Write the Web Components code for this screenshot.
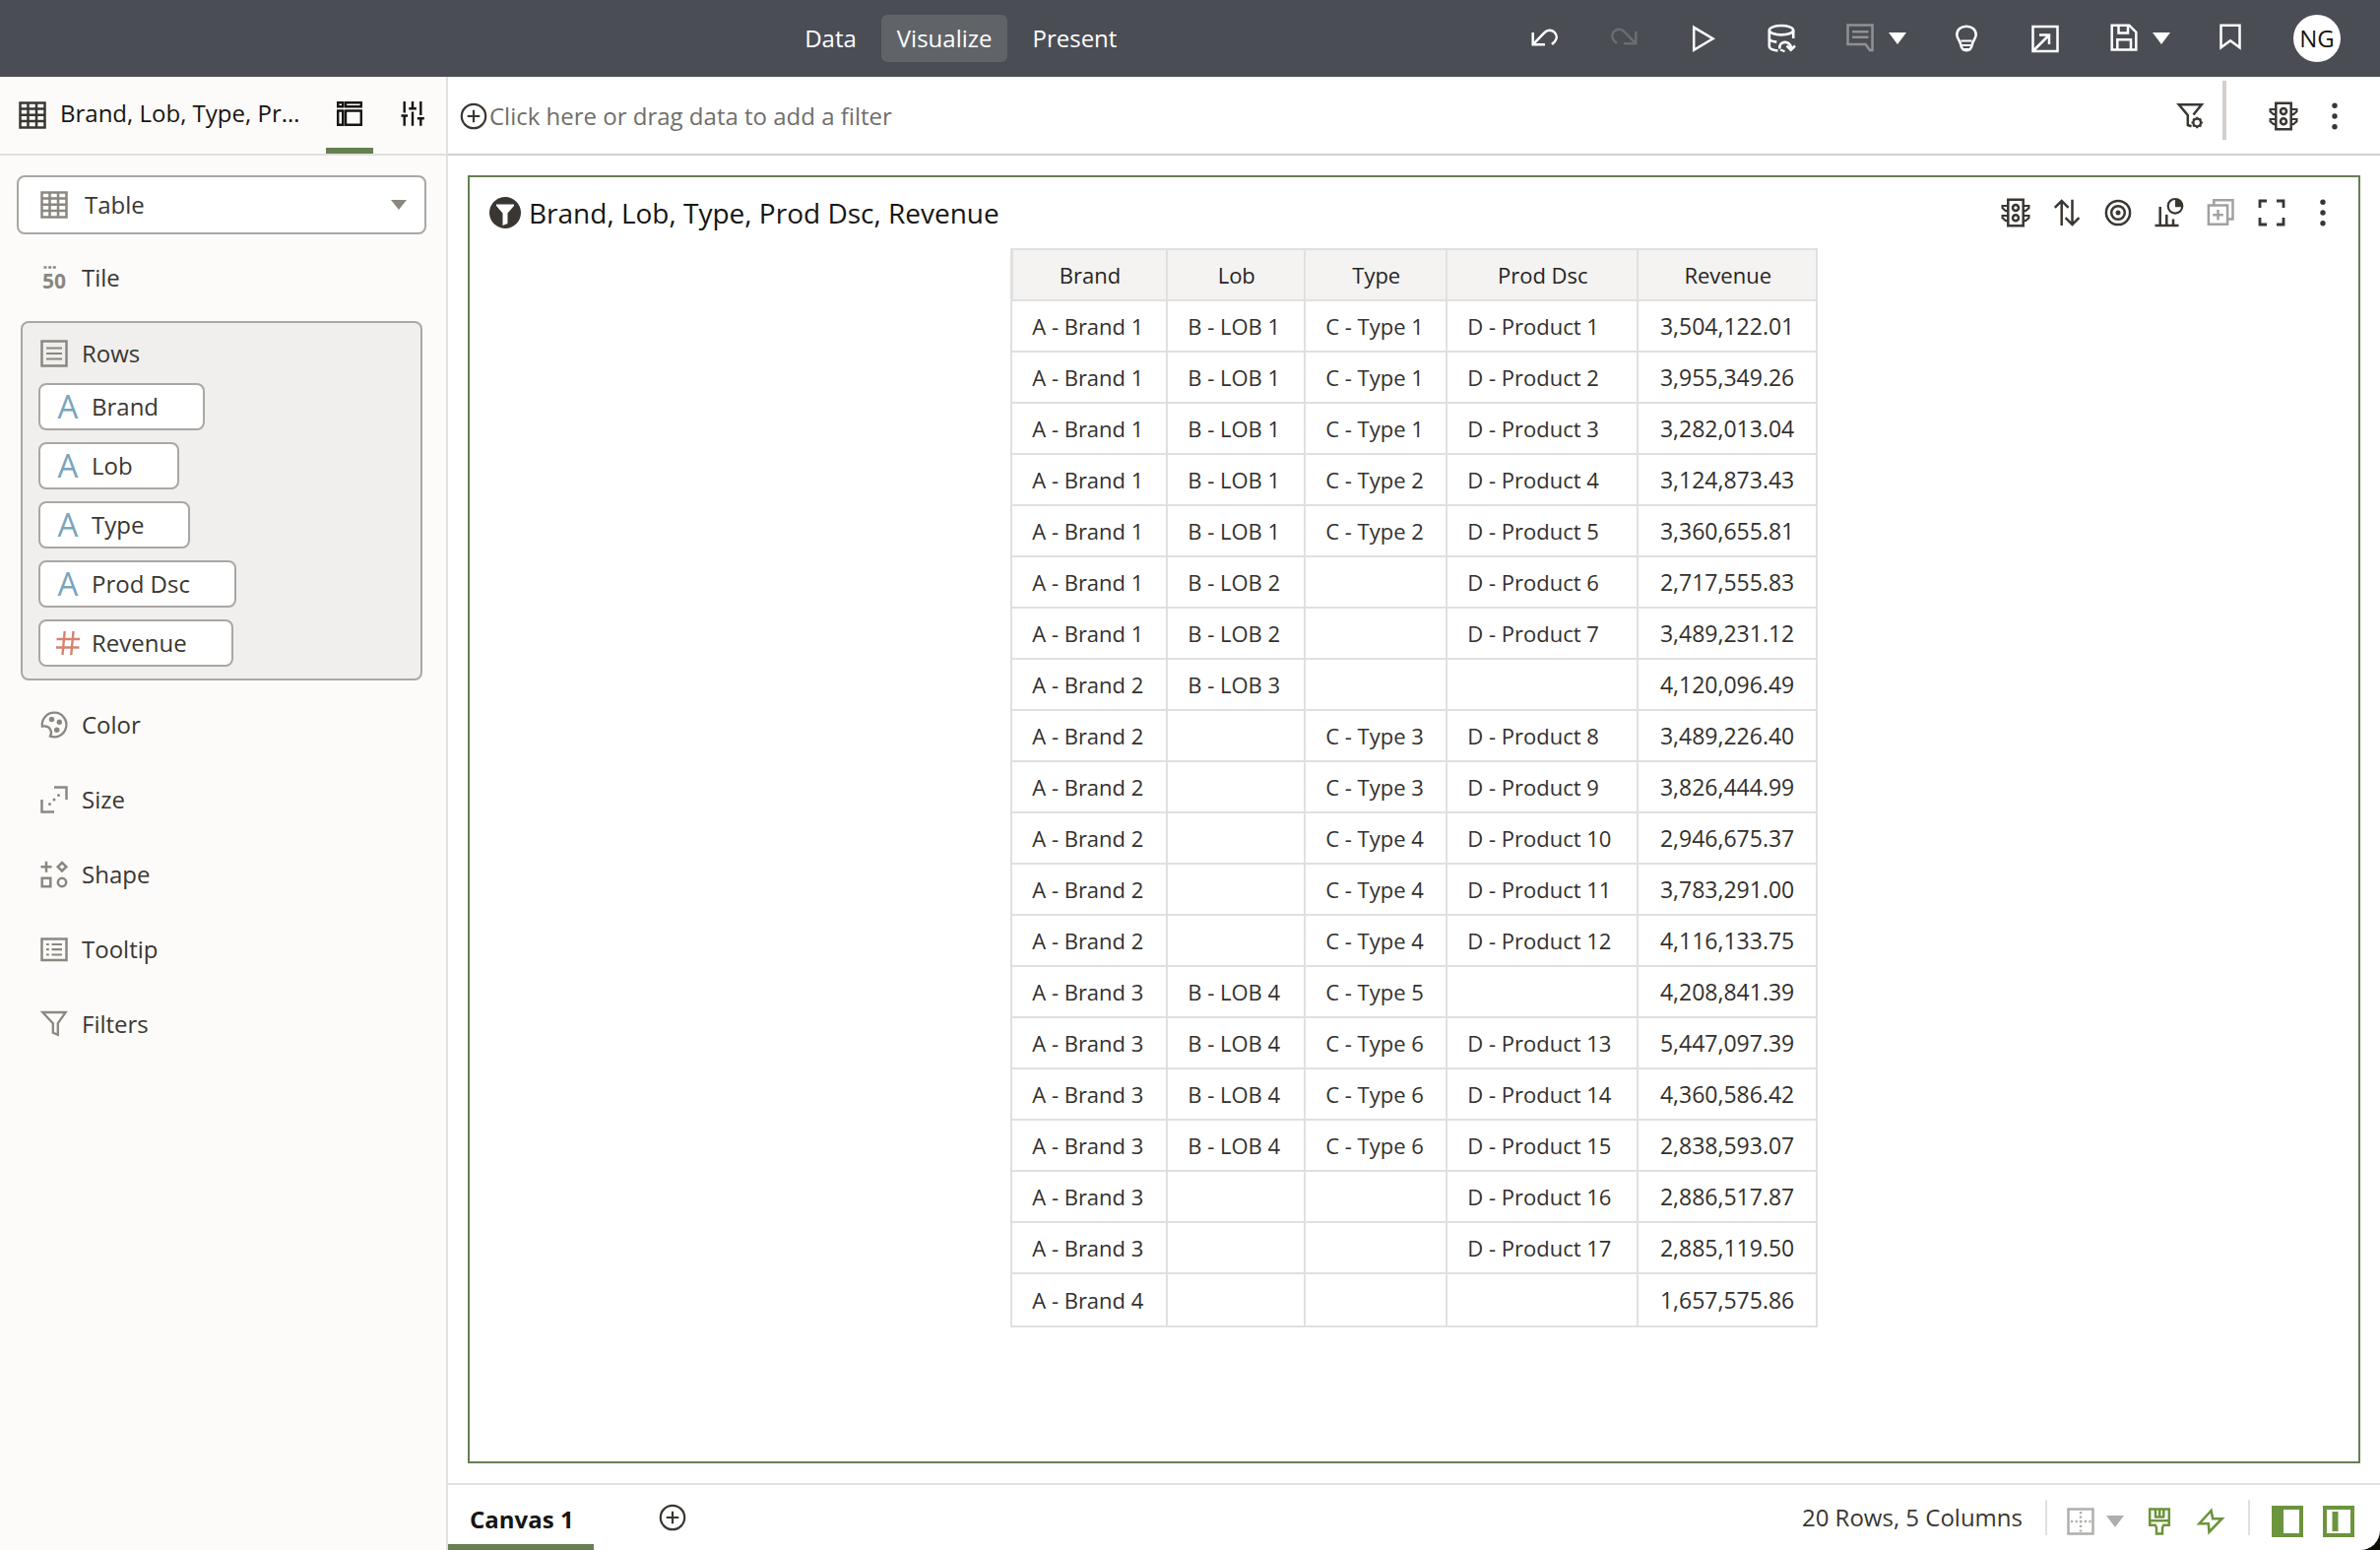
<!DOCTYPE html>
<html lang="en">
<head>
<meta charset="utf-8">
<title>Brand, Lob, Type, Prod Dsc, Revenue</title>
<style>
html, body { height: 100%; }
html { background: #0b0d06; }
body {
  margin: 0;
  font-family: "Open Sans", "Noto Sans", sans-serif;
  font-size: 24px;
  line-height: 32px;
  color: #3a3632;
  --line: #e0e0e0;
  --line-warm: #d4cfcb;
  --green: #677f53;
  --bright: #6c943c;
  --ink: #161513;
}
</style>
</head>
<body>
<dv-app></dv-app>
<script>
const RESET = `
  *, *::before, *::after { box-sizing: border-box; }
  button { all: unset; box-sizing: border-box; cursor: pointer; }
  button:focus-visible { outline: 2px solid #227e9e; }
`;
const define = (name, html, setup) => {
  customElements.define(name, class extends HTMLElement {
    constructor() {
      super();
      const root = this.attachShadow({ mode: 'open' });
      const t = document.createElement('template');
      t.innerHTML = `<style>${RESET}</style>${html}`;
      root.append(t.content.cloneNode(true));
    }
    connectedCallback() { if (setup) setup(this, this.shadowRoot); }
  });
};

/* Icons share a 32 x 32 box and are stroked with the current colour. */
const ICONS = {
  grid: '<path d="M3.5 3.5h25v25h-25zM3.5 9.5h25M3.5 15.7h25M3.5 21.9h25M11.5 3.5v25M20 3.5v25"/>',
  layout: '<g stroke-width="2.4"><path d="M4.2 4.2h5v4h-5zM12 4.2h15.8v4H12zM4.2 12.500h5v14.300h-5zM12 12.500h15.800v14.300H12z"/></g>',
  sliders: '<g stroke-width="2.4"><path d="M7.7 3v11.5M7.700 17.500v10.200M4.500 17.500h6.500M16 3v7M16 13.500v14.200M12.300 10.300h7.500M24.300 3v14M24.300 20v7.700M20.800 20.300h7"/></g>',
  rows: '<path d="M3.500 3.500h25v25h-25z"/><path d="M8 10.500h16M8 16h16M8 21.500h16" stroke-width="2.200"/>',
  tile: '<text x="16" y="27" text-anchor="middle" font-family="Open Sans" font-weight="700" font-size="21" fill="currentColor" stroke="none">50</text><path d="M5.500 5.500h3M10.200 5.500h3M14.800 5.500h3" stroke-width="2.600"/>',
  palette: '<path d="M3.900 17.600A12.300 12.300 0 1 1 12 27.600C13.200 25.500 13.500 23 12 20.500C10.600 18 8 16.800 3.900 17.600z" stroke-width="2.300"/><g fill="currentColor" stroke="none"><circle cx="13.500" cy="10.500" r="2.700"/><circle cx="21.300" cy="13.200" r="2.700"/><circle cx="18.700" cy="21.300" r="2.700"/></g>',
  size: '<path d="M16 3.500h12.500V16M3.500 16v12.500H16"/><g fill="currentColor" stroke="none"><circle cx="11.500" cy="20.500" r="1.500"/><circle cx="16" cy="16" r="1.500"/><circle cx="20.500" cy="11.500" r="1.500"/></g>',
  shape: '<path d="M8 2.700v11M2.500 8.200h11M3.700 19.700h8.600v8.600H3.700zM24 4l4.300 4.200L24 12.500l-4.300-4.300z"/><circle cx="24" cy="24" r="4.200"/>',
  tooltip: '<path d="M3.500 5.500h25v21.500h-25z"/><path d="M8 11h2.800M13.500 11H24M8 16.200h2.800M13.500 16.200H24M8 21.500h2.800M13.500 21.500H24" stroke-width="2.200"/>',
  funnel: '<path d="M4.300 4h23.400l-7.900 11.200v11.600l-5-2V15.200z" stroke-width="2.300"/>',
  attribute: '<text x="16" y="28" text-anchor="middle" font-family="Open Sans" font-size="33" fill="currentColor" stroke="none">A</text>',
  measure: '<path d="M12.700 4L10.500 28M21.500 4L19.300 28M4.500 12h23.500M4 20.500h23.500" stroke-width="2.400"/>',
  undo: '<path d="M3.700 10v12.300H16M4.300 21.700L15.500 10.200C18.500 7 22.500 6.800 25.500 9.700C28.500 12.700 28.500 16.500 25.800 19.300L23 22"/>',
  redo: '<path d="M28.300 9v12.300H16M27.700 20.700L16.500 9.200C13.500 6 9.500 5.800 6.500 8.700C3.500 11.700 3.500 15.500 6.200 18.300L9 21"/>',
  play: '<path d="M7.200 4.800v23L26.500 16.200z"/>',
  dataset: '<g stroke-width="2.600"><ellipse cx="16" cy="7.700" rx="12.200" ry="4.700"/><path d="M3.800 8v16c0 2.500 3.500 4 8.700 4.500M3.800 16c0 2 3.500 3.200 7.500 3.600M28.200 8v8M14.500 26.500c-2-8 11-9.500 11.500-.5M21.500 23.500l4.200 4.200L30 23.500"/></g><path d="M15 27.500l4.500 1.800" stroke-width="2"/>',
  comment: '<path d="M3.500 2.500h25v25.500h-2.500L21.500 22H3.500zM8 9.200h16.500M8 14.800h16.500"/>',
  bulb: '<path d="M6.300 12.200C6.300 7 10.500 3.700 16 3.700S25.700 7 25.700 12.200C25.700 16 22.500 18 21.800 22.200C21.300 26 19.500 28.200 16 28.200S10.700 26 10.200 22.200C9.500 18 6.300 16 6.300 12.200z"/><path d="M10.500 18.500h11M11.500 23h9" stroke-width="2.200"/><path d="M13 26h6l-2 2.500h-2z" fill="currentColor" stroke="none"/>',
  open: '<path d="M3.500 4h25v25h-25zM4 28.500L19.500 13M10 12.500h10v9.500"/>',
  save: '<path d="M3.700 2.700h17.600l7 7v17.800H3.700zM10.500 3v7.500h9.500V3M9.300 27v-9.700h13.700V27"/>',
  bookmark: '<path d="M6.500 2.700h19v22.500L16 18.200l-9.500 7z"/>',
  plus: '<circle cx="16" cy="16" r="12.200" stroke-width="2.200"/><path d="M16 9.700v12.600M9.700 16h12.600" stroke-width="2.200"/>',
  filterset: '<path d="M17.500 26.200L13.800 25V15L4.800 4.200h23L19.500 14.500"/><circle cx="23.200" cy="22.500" r="3.800" stroke-width="2.300"/><path d="M23.200 16.800v2M23.200 26.200v2M17.500 22.500h2M26.900 22.500h2M19.200 18.500l1.400 1.400M25.800 25.100l1.400 1.400M27.200 18.500l-1.400 1.400M20.600 25.100l-1.400 1.400" stroke-width="2.200"/>',
  traffic: '<path d="M8.300 2.700h15.400v26.600H8.300z"/><circle cx="16" cy="10.900" r="3"/><circle cx="16" cy="21.200" r="3"/><path d="M8 9H2.600v2.200L6 14.200h2M8 19H2.600v2.200L6 24.200h2M24 9h5.400v2.200L26 14.200h-2M24 19h5.400v2.200L26 24.200h-2" stroke-width="2.200"/>',
  dots: '<g fill="currentColor" stroke="none"><circle cx="16" cy="5.300" r="2.700"/><circle cx="16" cy="16" r="2.700"/><circle cx="16" cy="26.700" r="2.700"/></g>',
  sort: '<path d="M10.700 4v25M3.800 10.800l6.900-6.900 6.900 6.900M21.500 2.700V28M14.600 21.200l6.900 6.900 6.900-6.900"/>',
  target: '<circle cx="16" cy="16" r="12.100"/><circle cx="16" cy="16" r="6.800"/><circle cx="16" cy="16" r="2.500" fill="currentColor" stroke="none"/>',
  chart: '<path d="M1.500 29h24M6.700 10v19M13.300 18v11M20 22.500V29"/><circle cx="22" cy="9.300" r="7.300" stroke-width="2.200"/><path d="M22 10.300V2a7.300 7.300 0 0 1 7.300 8.300z" fill="currentColor" stroke="none"/>',
  duplicate: '<path d="M3.900 8.500h19.200v19.200H3.900zM9.300 8.500V3.200h19.200v19.200H23M13.500 13v10.500M8.300 18.200h10.500" stroke-width="2.500"/>',
  expand: '<path d="M4 11V4h7M21 4h7v7M28 21v7h-7M11 28H4v-7" stroke-width="2.800"/>',
  funneldisc: '<circle cx="16" cy="16" r="16" fill="#3a3632" stroke="none"/><path d="M7 7.500h18v1.500l-6.500 7.500v10.500l-5 2V16.500L7 9z" fill="#fff" stroke="none"/>',
  gridlines: '<path d="M3.500 3.500h25v25h-25z"/><path d="M16 6v21M6 16h21" stroke-dasharray="2.200 2.400"/>',
  brush: '<path d="M6.200 3.500h19.600v16.200h-5.500l-1.300 2.500v6.300h-6v-6.300l-1.300-2.500H6.200zM6.200 15.200h19.600M12 4v8M16.200 4v8M20.300 4v8M11 11.500h10"/>',
  bolt: '<path d="M16.500 5L4.500 18.200h9.300l.7 8.500L27.500 13.200h-9.300z" stroke-width="2.600"/>',
  panelleft: '<path d="M2 2h28v28H2z" stroke-width="4"/><path d="M6 2v28" stroke-width="12"/>',
  panelmid: '<path d="M2 2h28v28H2z" stroke-width="4"/><path d="M12.500 6v20" stroke-width="6"/>',
};

define('dv-icon', `
  <style>
    :host { display: block; width: 32px; height: 32px; flex: none; }
    svg { display: block; width: 100%; height: 100%; overflow: visible; }
  </style>
  <svg viewBox="0 0 32 32" fill="none" stroke="currentColor" stroke-width="2.5" aria-hidden="true"></svg>
`, (el, root) => { root.querySelector('svg').innerHTML = ICONS[el.getAttribute('name')] || ''; });

define('dv-caret', `
  <style>
    :host { display: block; width: 18px; height: 12px; flex: none; background: currentColor; clip-path: polygon(0 0, 100% 0, 50% 100%); }
  </style>`);

define('dv-icon-button', `
  <style>
    :host { display: block; flex: none; }
    button { display: grid; place-items: center; width: var(--hit, 48px); height: var(--hit, 48px); }
  </style>
  <button type="button"></button>
`, (el, root) => {
  const b = root.querySelector('button');
  b.innerHTML = `<dv-icon name="${el.getAttribute('icon')}"></dv-icon>`;
  b.setAttribute('aria-label', el.getAttribute('label'));
});

define('dv-topbar', `
  <style>
    :host { display: flex; align-items: center; height: 78px; padding-right: 40px; background: #4b4d55; color: #fff; }
    .lead { flex: 67; } .mid { flex: 33; }
    nav { display: flex; gap: 9px; }
    nav button { height: 48px; padding: 0 16px; line-height: 48px; border-radius: 6px; }
    nav button[aria-current] { background: #606367; }
    .tools { display: flex; align-items: center; gap: 32px; }
    .split { display: flex; align-items: center; }
    .split button { display: grid; place-items: center; width: 28px; height: 48px; }
    .off { color: #8f9196; } .faint { color: #6b6d73; }
    .avatar { width: 48px; height: 48px; margin-left: 8px; border-radius: 50%; background: #fff; color: #161513; text-align: center; line-height: 48px; }
  </style>
  <span class="lead"></span>
  <nav>
    <button type="button">Data</button>
    <button type="button" aria-current="page">Visualize</button>
    <button type="button">Present</button>
  </nav>
  <span class="mid"></span>
  <div class="tools">
    <dv-icon-button icon="undo" label="Undo"></dv-icon-button>
    <dv-icon-button icon="redo" label="Redo" class="faint"></dv-icon-button>
    <dv-icon-button icon="play" label="Preview"></dv-icon-button>
    <dv-icon-button icon="dataset" label="Refresh data"></dv-icon-button>
    <div class="split"><dv-icon-button icon="comment" label="Notes" class="off"></dv-icon-button><button type="button" aria-label="Note options"><dv-caret></dv-caret></button></div>
    <dv-icon-button icon="bulb" label="Insights"></dv-icon-button>
    <dv-icon-button icon="open" label="Export"></dv-icon-button>
    <div class="split"><dv-icon-button icon="save" label="Save"></dv-icon-button><button type="button" aria-label="Save options"><dv-caret></dv-caret></button></div>
    <dv-icon-button icon="bookmark" label="Bookmark"></dv-icon-button>
    <button class="avatar" type="button">NG</button>
  </div>
`);

define('dv-shelf-item', `
  <style>
    :host { display: block; }
    button { display: flex; align-items: center; gap: 12px; width: 100%; height: 76px; padding-left: 39px; }
    .i { color: #8b8780; }
  </style>
  <button type="button"><span class="i"></span><slot></slot></button>
`, (el, root) => { root.querySelector('.i').innerHTML = `<dv-icon name="${el.getAttribute('icon')}"></dv-icon>`; });

define('dv-chip', `
  <style>
    :host { display: block; }
    button { display: inline-flex; align-items: center; gap: 8px; height: 48px; padding: 0 45px 0 12px; border: 2px solid #aaa7a3; border-radius: 8px; background: #fff; vertical-align: top; }
    .i { color: #7aa5be; }
    :host([kind="measure"]) .i { color: #d5826f; }
  </style>
  <button type="button"><span class="i"></span><slot></slot></button>
`, (el, root) => { root.querySelector('.i').innerHTML = `<dv-icon name="${el.getAttribute('kind')}"></dv-icon>`; });

define('dv-grammar', `
  <style>
    :host { display: flex; flex-direction: column; width: 455px; flex: none; background: #fcfbf9; border-right: 2px solid var(--line); }
    header { display: flex; align-items: stretch; height: 80px; padding: 0 10px 0 17px; border-bottom: 2px solid var(--line); color: var(--ink); }
    h2 { display: flex; flex: 1; align-items: center; gap: 12px; min-width: 0; margin: 0; font: inherit; white-space: nowrap; }
    h2 dv-icon { color: #3a3632; }
    h2 span { padding-bottom: 4px; }
    header button { display: grid; place-items: center; width: 48px; border-bottom: 6px solid transparent; padding-top: 4px; }
    header button + button { margin-left: 16px; }
    header button[aria-selected="true"] { border-color: var(--green); }
    .type { display: grid; align-items: center; margin: 20px 20px 6px 17px; color: #8b8780; }
    .type > * { grid-area: 1 / 1; }
    .type dv-icon { margin-left: 22px; pointer-events: none; z-index: 1; }
    .type dv-caret { justify-self: end; width: 16px; height: 10px; margin-right: 20px; pointer-events: none; z-index: 1; }
    select { appearance: none; width: 100%; height: 60px; padding: 0 48px 0 67px; border: 2px solid #aaa7a3; border-radius: 8px; background: #fff; font: inherit; color: #3a3632; }
    .rows { margin: 6px 24px 7px 21px; padding-bottom: 12px; border: 2px solid #aaa7a3; border-radius: 8px; background: #f0efed; }
    .rows h3 { display: flex; align-items: center; gap: 12px; height: 61px; margin: 0; padding-left: 16px; font: inherit; }
    .rows h3 dv-icon { color: #8b8780; }
    .chips { display: grid; gap: 12px; padding-left: 16px; }
  </style>
  <header>
    <h2><dv-icon name="grid"></dv-icon><span>Brand, Lob, Type, Pr…</span></h2>
    <button type="button" role="tab" aria-selected="true" aria-label="Grammar"><dv-icon name="layout"></dv-icon></button>
    <button type="button" role="tab" aria-selected="false" aria-label="Properties"><dv-icon name="sliders"></dv-icon></button>
  </header>
  <div class="type">
    <dv-icon name="grid"></dv-icon>
    <select aria-label="Visualization type"><option>Table</option></select>
    <dv-caret></dv-caret>
  </div>
  <dv-shelf-item icon="tile">Tile</dv-shelf-item>
  <section class="rows">
    <h3><dv-icon name="rows"></dv-icon>Rows</h3>
    <div class="chips">
      <dv-chip kind="attribute">Brand</dv-chip>
      <dv-chip kind="attribute">Lob</dv-chip>
      <dv-chip kind="attribute">Type</dv-chip>
      <dv-chip kind="attribute">Prod Dsc</dv-chip>
      <dv-chip kind="measure">Revenue</dv-chip>
    </div>
  </section>
  <dv-shelf-item icon="palette">Color</dv-shelf-item>
  <dv-shelf-item icon="size">Size</dv-shelf-item>
  <dv-shelf-item icon="shape">Shape</dv-shelf-item>
  <dv-shelf-item icon="tooltip">Tooltip</dv-shelf-item>
  <dv-shelf-item icon="funnel">Filters</dv-shelf-item>
`);

define('dv-filter-bar', `
  <style>
    :host { display: flex; align-items: center; height: 80px; padding: 2px 20px 0 10px; border-bottom: 2px solid var(--line-warm); }
    .add { display: flex; flex: 1; align-items: center; color: #706e6a; }
    .add dv-icon { color: #3a3632; }
    i { width: 4px; height: 60px; margin: 0 32px 12px 9px; background: var(--line-warm); }
  </style>
  <button class="add" type="button"><dv-icon name="plus"></dv-icon>Click here or drag data to add a filter</button>
  <dv-icon-button icon="filterset" label="Filter settings"></dv-icon-button>
  <i></i>
  <dv-icon-button icon="traffic" label="Conditional formatting" style="--hit:52px"></dv-icon-button>
  <dv-icon-button icon="dots" label="Menu" style="--hit:52px"></dv-icon-button>
`);

const DATA = [
  ['1','1','1','1','3,504,122.01'], ['1','1','1','2','3,955,349.26'], ['1','1','1','3','3,282,013.04'],
  ['1','1','2','4','3,124,873.43'], ['1','1','2','5','3,360,655.81'], ['1','2','','6','2,717,555.83'],
  ['1','2','','7','3,489,231.12'], ['2','3','','','4,120,096.49'], ['2','','3','8','3,489,226.40'],
  ['2','','3','9','3,826,444.99'], ['2','','4','10','2,946,675.37'], ['2','','4','11','3,783,291.00'],
  ['2','','4','12','4,116,133.75'], ['3','4','5','','4,208,841.39'], ['3','4','6','13','5,447,097.39'],
  ['3','4','6','14','4,360,586.42'], ['3','4','6','15','2,838,593.07'], ['3','','','16','2,886,517.87'],
  ['3','','','17','2,885,119.50'], ['4','','','','1,657,575.86'],
];
const PREFIX = ['A - Brand ', 'B - LOB ', 'C - Type ', 'D - Product ', ''];

define('dv-table', `
  <style>
    :host { display: block; font-size: 22px; line-height: 30px; }
    table { margin: 0 auto; border-collapse: collapse; table-layout: fixed; width: 820px; }
    th, td { height: 52px; padding: 0 19px 0 20px; border: 2px solid var(--line); font-weight: 400; text-align: left; white-space: nowrap; color: #33302d; }
    th { background: #f4f3f2; color: #262422; text-align: center; }
    th:first-child { border-left-width: 3px; }
    tr:last-child td { height: 54px; }
    td:last-child { padding-right: 22px; font-size: 23px; text-align: right; }
  </style>
  <table>
    <colgroup><col style="width:158px"><col style="width:140px"><col style="width:144px"><col style="width:194px"><col style="width:182px"></colgroup>
    <thead><tr><th scope="col">Brand</th><th scope="col">Lob</th><th scope="col">Type</th><th scope="col">Prod Dsc</th><th scope="col">Revenue</th></tr></thead>
    <tbody></tbody>
  </table>
`, (el, root) => {
  root.querySelector('tbody').innerHTML = DATA.map(r =>
    `<tr>${r.map((v, i) => `<td>${v && PREFIX[i] + v}</td>`).join('')}</tr>`).join('');
});

define('dv-visualization', `
  <style>
    :host { display: block; flex: 1; margin: 20px; border: 2px solid var(--green); }
    header { display: flex; align-items: center; height: 72px; padding: 0 10px 0 20px; }
    h1 { flex: 1; margin: 0 0 0 8px; font: inherit; font-size: 28px; line-height: 36px; color: var(--ink); }
    .tools { display: flex; --hit: 52px; }
    .off { color: #a3a19f; }
  </style>
  <header>
    <dv-icon name="funneldisc"></dv-icon>
    <h1>Brand, Lob, Type, Prod Dsc, Revenue</h1>
    <div class="tools">
      <dv-icon-button icon="traffic" label="Conditional formatting"></dv-icon-button>
      <dv-icon-button icon="sort" label="Sort"></dv-icon-button>
      <dv-icon-button icon="target" label="Use as filter"></dv-icon-button>
      <dv-icon-button icon="chart" label="Change visualization"></dv-icon-button>
      <dv-icon-button icon="duplicate" label="Duplicate" class="off"></dv-icon-button>
      <dv-icon-button icon="expand" label="Maximize"></dv-icon-button>
      <dv-icon-button icon="dots" label="Menu"></dv-icon-button>
    </div>
  </header>
  <slot></slot>
`);

define('dv-statusbar', `
  <style>
    :host { display: flex; align-items: center; height: 68px; padding-right: 16px; border-top: 2px solid var(--line); white-space: nowrap; }
    .tab { align-self: stretch; width: 148px; padding: 4px 0 0 22px; border-bottom: 6px solid var(--green); font-weight: 700; color: var(--ink); line-height: 62px; }
    .add { display: grid; place-items: center; width: 48px; height: 48px; margin-left: 56px; color: #3a3632; }
    .count { flex: 1; text-align: right; color: #3a3632; }
    i { width: 2px; height: 36px; background: var(--line); }
    .group { display: flex; align-items: center; color: var(--bright); padding-top: 8px; }
    .group dv-icon-button { --hit: 52px; }
    .off { color: #b0aeac; display: flex; align-items: center; }
    .off button { display: grid; place-items: center; width: 18px; height: 48px; margin-right: 10px; }
  </style>
  <button class="tab" type="button">Canvas 1</button>
  <button class="add" type="button" aria-label="Add canvas"><dv-icon name="plus"></dv-icon></button>
  <span class="count">20 Rows, 5 Columns</span>
  <i style="margin:0 8px 0 23px"></i>
  <div class="group">
    <span class="off"><dv-icon-button icon="gridlines" label="Grid lines"></dv-icon-button><button type="button" aria-label="Grid options"><dv-caret></dv-caret></button></span>
    <dv-icon-button icon="brush" label="Brushing"></dv-icon-button>
    <dv-icon-button icon="bolt" label="Auto apply"></dv-icon-button>
  </div>
  <i style="margin:0 12px"></i>
  <div class="group">
    <dv-icon-button icon="panelleft" label="Data panel"></dv-icon-button>
    <dv-icon-button icon="panelmid" label="Grammar panel"></dv-icon-button>
  </div>
`);

define('dv-app', `
  <style>
    :host { display: flex; flex-direction: column; min-height: 100vh; background: #fff; border-bottom-right-radius: 20px; overflow: hidden; }
    .body { display: flex; flex: 1; }
    main { display: flex; flex: 1; flex-direction: column; min-width: 0; }
  </style>
  <dv-topbar></dv-topbar>
  <div class="body">
    <dv-grammar></dv-grammar>
    <main>
      <dv-filter-bar></dv-filter-bar>
      <dv-visualization><dv-table></dv-table></dv-visualization>
      <dv-statusbar></dv-statusbar>
    </main>
  </div>
`);
</script>
</body>
</html>
